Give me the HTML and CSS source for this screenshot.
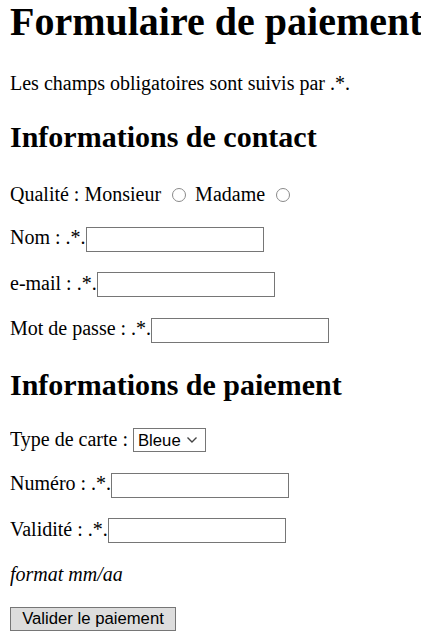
FILE: index.html
```html
<!DOCTYPE html>
<html lang="fr">
<head>
<meta charset="utf-8">
<title>Formulaire de paiement</title>
<link rel="stylesheet" href="styles.css">
</head>
<body>
<h1 class="title">Formulaire de paiement</h1>
<p class="row">Les champs obligatoires sont suivis par .*.</p>
<form class="form">
<h2 class="section">Informations de contact</h2>
<p class="row row-radio">Qualité : <label>Monsieur <input type="radio" name="q" class="radio"></label> <label>Madame <input type="radio" name="q" class="radio"></label></p>
<p class="row"><label>Nom : .*.<input type="text" class="field"></label></p>
<p class="row"><label>e-mail : .*.<input type="email" class="field"></label></p>
<p class="row"><label>Mot de passe : .*.<input type="password" class="field"></label></p>
<h2 class="section">Informations de paiement</h2>
<p class="row"><label>Type de carte : <select class="sel"><option>Bleue</option><option>Visa</option></select></label></p>
<p class="row"><label>Numéro : .*.<input type="text" class="field"></label></p>
<p class="row"><label>Validité : .*.<input type="text" class="field"></label></p>
<p class="row"><em>format mm/aa</em></p>
<p class="row"><button type="submit" class="btn">Valider le paiement</button></p>
</form>
</body>
</html>
```
FILE: styles.css
```css
body {
  font-family: "Liberation Serif", "Times New Roman", serif;
  font-size: 20px;
  color: #000;
  background: #fff;
  margin: 0 10px 10px;
}
.title {
  font-size: 40px;
  font-weight: bold;
  white-space: nowrap;
  margin: -2px 0 27px;
}
.section {
  font-size: 30px;
  font-weight: bold;
  white-space: nowrap;
  margin: 25px 0 26px;
}
.row {
  margin: 20px 0;
}
.row-radio {
  margin-top: 29px;
}
.radio {
  -webkit-appearance: none;
  appearance: none;
  box-sizing: border-box;
  width: 14px;
  height: 14px;
  margin: 0 4px 0 6px;
  border: 1px solid #8a8a8a;
  border-radius: 50%;
  background: #fff;
  vertical-align: -1px;
}
.field {
  box-sizing: border-box;
  width: 178px;
  height: 25px;
  padding: 1px 3px;
  border: 1px solid #767676;
  font-family: "Liberation Sans", Arial, sans-serif;
  font-size: 16.7px;
}
.sel {
  -webkit-appearance: none;
  appearance: none;
  box-sizing: border-box;
  width: 73px;
  height: 24px;
  border: 1px solid #767676;
  border-radius: 0;
  background: #fff url("data:image/svg+xml,%3Csvg xmlns='http://www.w3.org/2000/svg' width='12' height='8' viewBox='0 0 12 8'%3E%3Cpath d='M1.5 1.5 6 6 10.5 1.5' fill='none' stroke='%23444' stroke-width='1.4'/%3E%3C/svg%3E") no-repeat right 7px center;
  font-family: "Liberation Sans", Arial, sans-serif;
  font-size: 16.7px;
  color: #000;
  padding: 0 4px;
}
.btn {
  box-sizing: border-box;
  width: 166px;
  height: 24px;
  padding: 0 6px;
  border: 1px solid #767676;
  border-radius: 0;
  background: #dddddd;
  color: #000;
  font-family: "Liberation Sans", Arial, sans-serif;
  font-size: 16.7px;
}
```
